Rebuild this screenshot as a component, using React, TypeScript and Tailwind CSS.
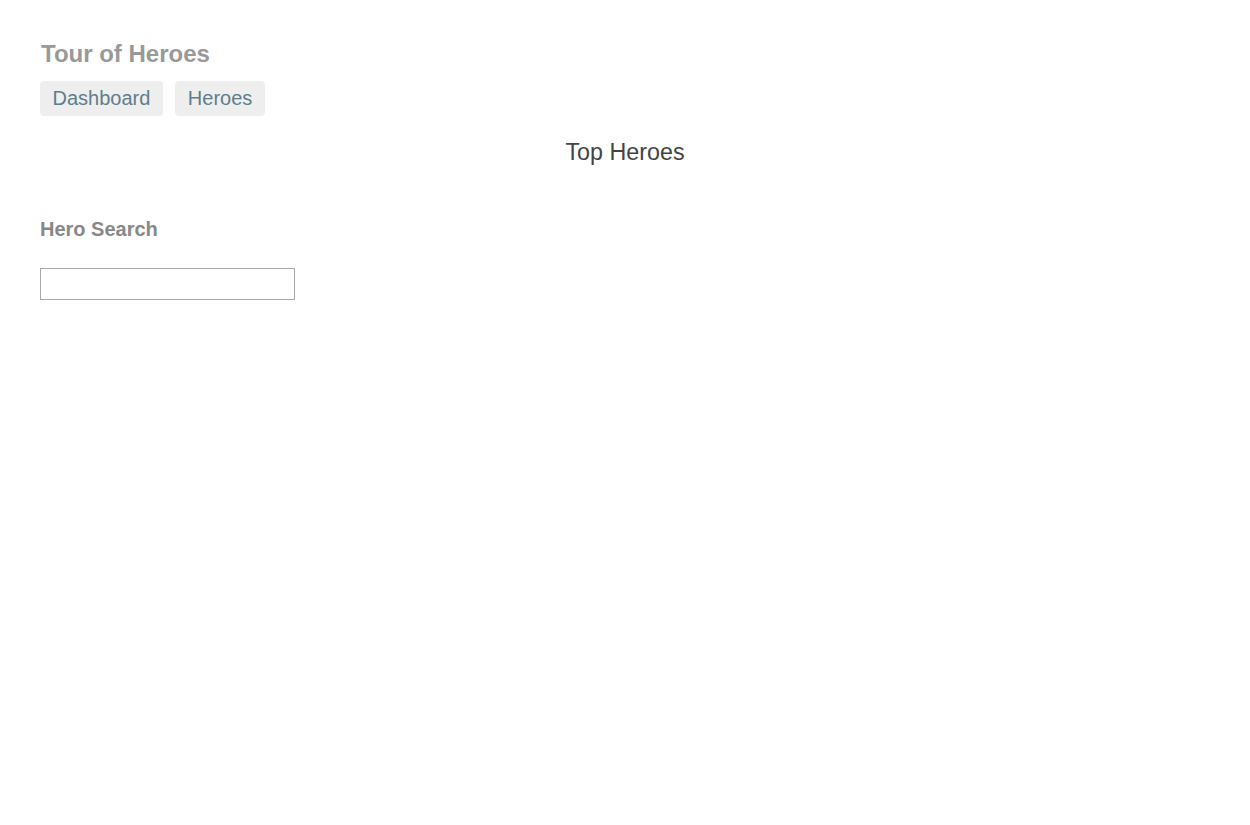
export default function App() {
  return (
    <div className="min-h-[825px] bg-white px-10 pt-10 font-['Liberation_Sans',Arial,sans-serif]">
      <h1 className="pl-px text-[24px] font-bold leading-[27px] text-[#999]">Tour of Heroes</h1>

      <nav className="mt-[14px] flex gap-3">
        <a className="rounded bg-[#eee] px-[12.5px] py-[6px] text-[20px] leading-[23px] text-[#607d8b]" href="#">
          Dashboard
        </a>
        <a className="rounded bg-[#eee] px-[13px] py-[6px] text-[20px] leading-[23px] text-[#607d8b]" href="#">
          Heroes
        </a>
      </nav>

      <h3 className="mt-[23px] text-center text-[23.3px] leading-[27px] text-[#444]">Top Heroes</h3>

      <div className="mt-[52px]">
        <h4 className="text-[20px] font-bold leading-[23px] text-[#888]">Hero Search</h4>
        <input className="mt-[27px] block h-8 w-[255px] border border-[#a9a9a9] px-1 text-sm outline-none" />
      </div>
    </div>
  );
}
